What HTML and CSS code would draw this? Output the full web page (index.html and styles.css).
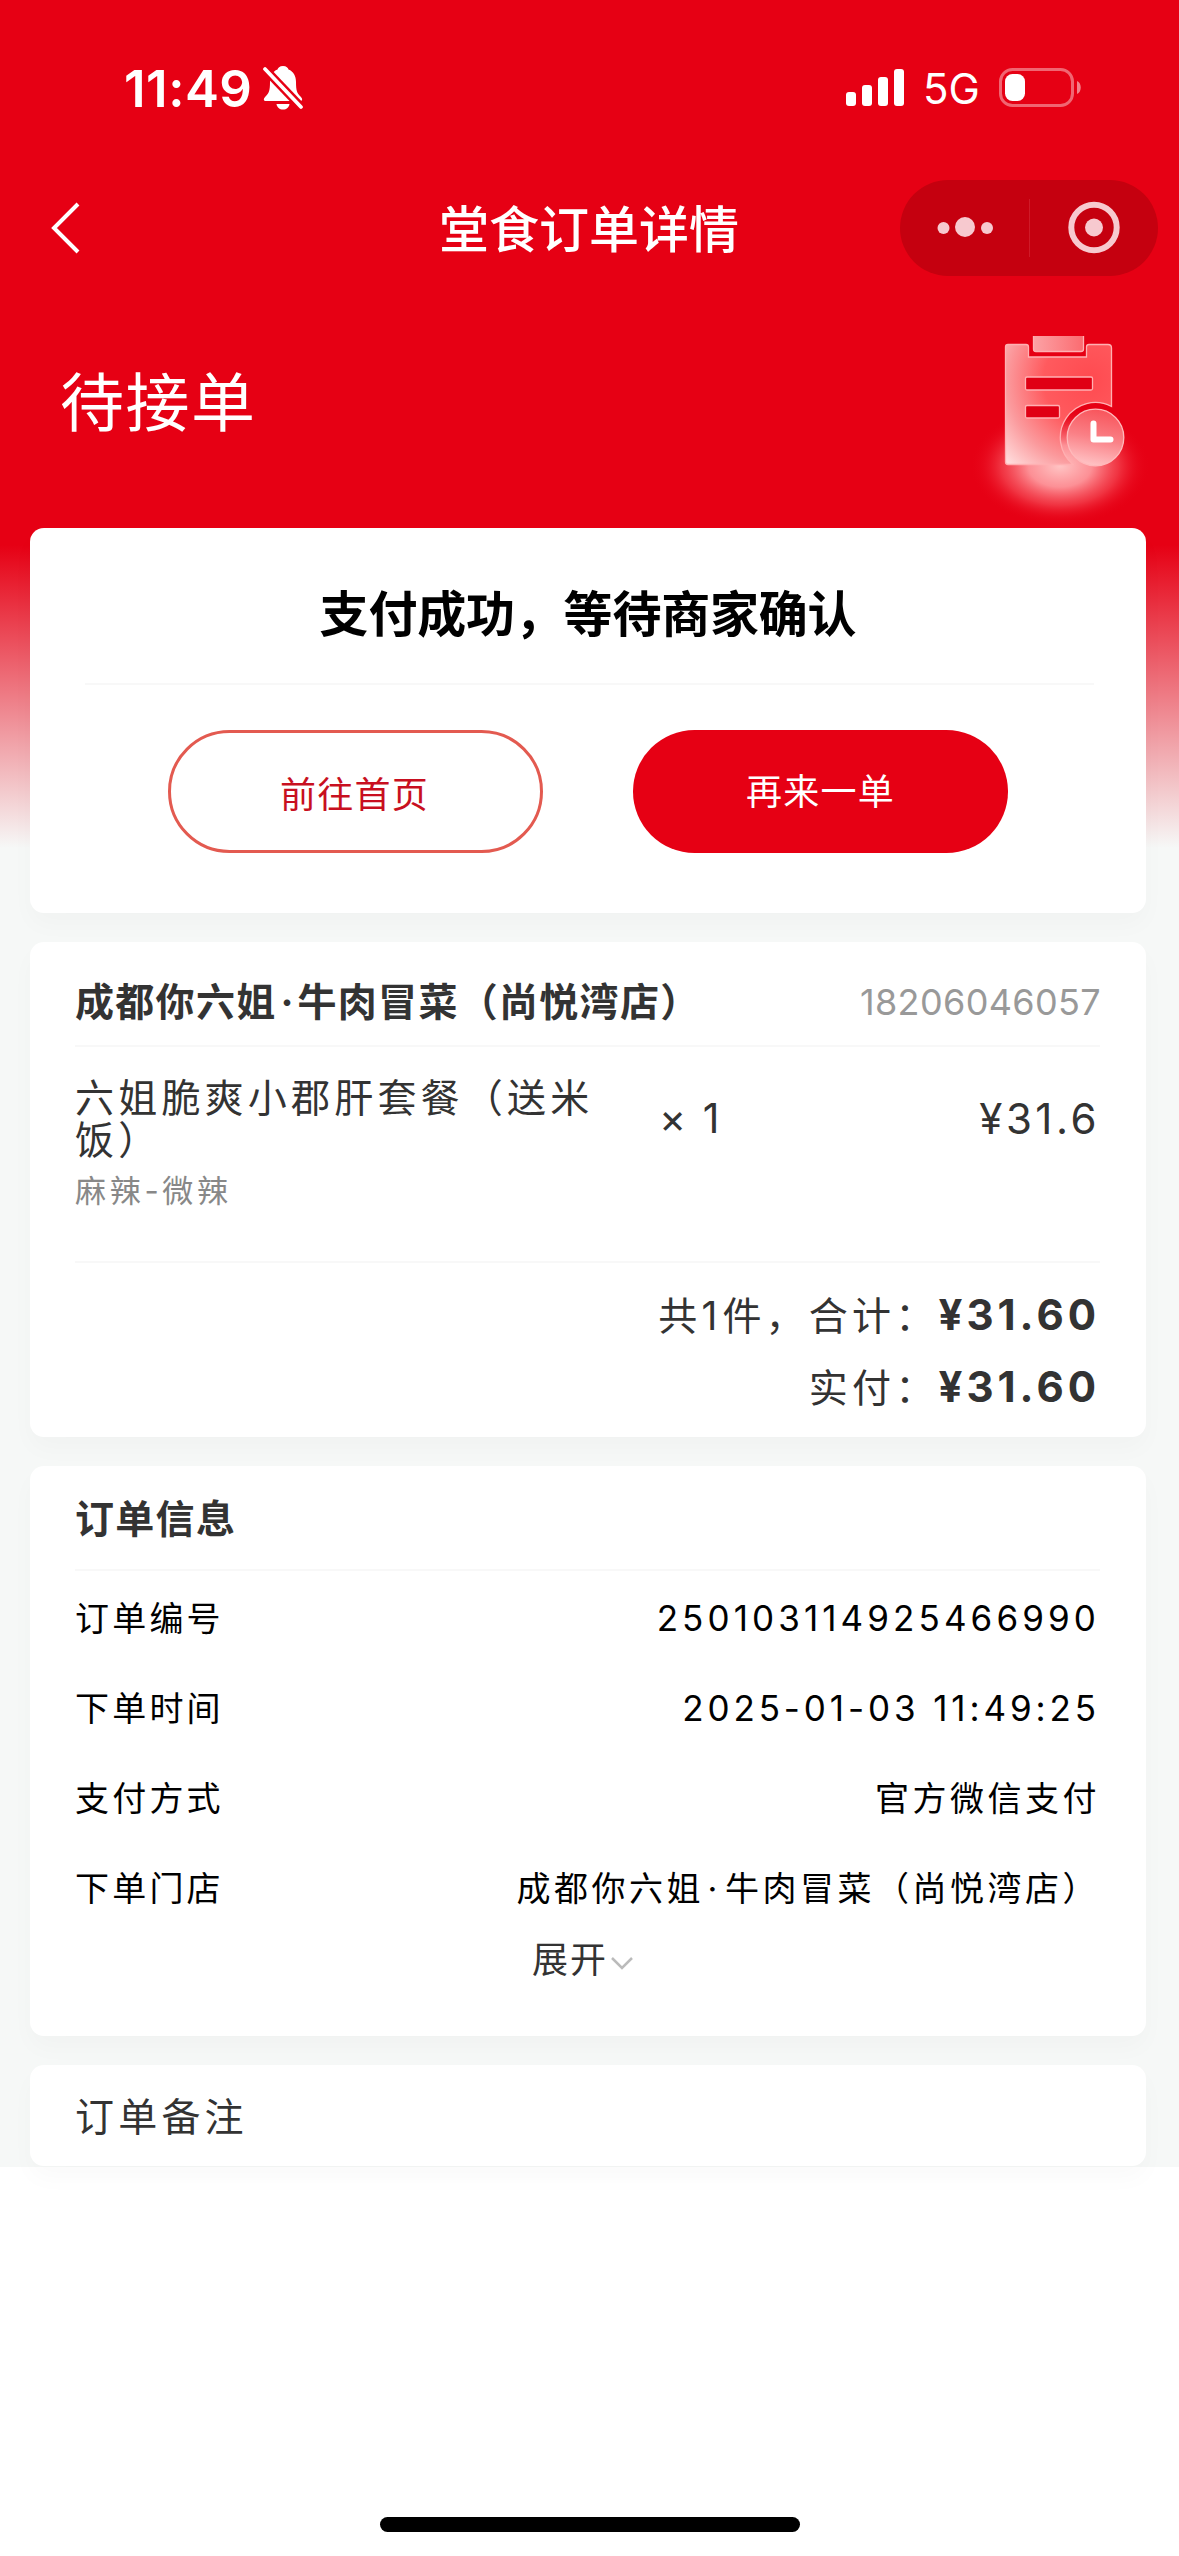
FILE: index.html
```
<!DOCTYPE html>
<html lang="zh-CN">
<head>
  <meta charset="UTF-8">
  <title>堂食订单详情</title>
  <link rel="stylesheet" href="styles.css">
</head>
<body>

  <div class="page">
    <div class="status-bar">
      <div class="status-left">
        <span class="time">11:49</span>
        <svg class="bell" width="40" height="44" viewBox="0 0 40 44">
          <path d="M20 0c-3.500 0-5 2-5.500 3.500C9.500 5.500 7 10 7 16c0 9-1 11-4.500 14.500C0 33 .5 35 3 35h34c2.500 0 3-2 .5-4.500C34 27 33 25 33 16c0-6-2.500-10.500-7.500-12.500C25 2 23.500 0 20 0z" fill="#fff"/>
          <path d="M13.500 38h13c-.5 3.500-3 5.500-6.500 5.500s-6-2-6.500-5.500z" fill="#fff"/>
          <path d="M0 1l40 42" stroke="#e60014" stroke-width="8.500"/>
          <path d="M2 3l36 38" stroke="#fff" stroke-width="3.700" stroke-linecap="round"/>
        </svg>
      </div>
      <div class="status-right">
        <svg width="58" height="38" viewBox="0 0 58 38" fill="#fff">
          <rect x="0" y="23" width="10" height="14" rx="3"/>
          <rect x="16" y="16" width="10" height="21" rx="3"/>
          <rect x="32" y="8" width="10" height="29" rx="3"/>
          <rect x="48" y="0" width="10" height="37" rx="3"/>
        </svg>
        <span class="network">5G</span>
        <svg class="battery" width="84" height="40" viewBox="0 0 84 40">
          <rect x="1.500" y="1.500" width="72" height="36" rx="12" fill="none" stroke="#fff" stroke-opacity=".4" stroke-width="3"/>
          <rect x="6" y="6" width="20" height="27" rx="7.500" fill="#fff"/>
          <path d="M78 13c5 2 5 11 0 13z" fill="#fff" fill-opacity=".5"/>
        </svg>
      </div>
    </div>

    <div class="nav">
      <svg class="back" width="30" height="54" viewBox="0 0 30 54">
        <path d="M28 3L4 27l24 24" fill="none" stroke="#fff" stroke-width="4"/>
      </svg>
      <h1>堂食订单详情</h1>
      <div class="capsule">
        <svg width="258" height="96" viewBox="0 0 258 96" fill="#f7c9cf">
          <circle cx="43.500" cy="48" r="6"/>
          <circle cx="65" cy="47" r="10"/>
          <circle cx="87" cy="48" r="6"/>
          <rect x="129" y="19" width="1" height="58" fill="#cf1a28"/>
          <circle cx="194" cy="47.500" r="22.700" fill="none" stroke="#f7c9cf" stroke-width="6"/>
          <circle cx="194" cy="47.500" r="9"/>
        </svg>
      </div>
    </div>

    <div class="state">
      <span>待接单</span>
      <svg width="219" height="208" viewBox="960 320 219 208">
        <defs>
          <radialGradient id="glow">
            <stop offset="0" stop-color="#ffc4c4"/>
            <stop offset=".35" stop-color="#ffa0a4" stop-opacity=".9"/>
            <stop offset=".65" stop-color="#fb6870" stop-opacity=".5"/>
            <stop offset=".85" stop-color="#f02838" stop-opacity=".2"/>
            <stop offset="1" stop-color="#e60014" stop-opacity="0"/>
          </radialGradient>
          <radialGradient id="paper" gradientUnits="userSpaceOnUse" cx="1090" cy="380" r="116">
            <stop offset="0" stop-color="#ff4a50"/>
            <stop offset=".4" stop-color="#ff5a5e"/>
            <stop offset=".72" stop-color="#fb9a9d"/>
            <stop offset="1" stop-color="#ffdcdc"/>
          </radialGradient>
          <linearGradient id="clock" x1=".6" y1="0" x2=".4" y2="1">
            <stop offset="0" stop-color="#f8545b"/>
            <stop offset=".5" stop-color="#fa8086"/>
            <stop offset="1" stop-color="#ffc4c6"/>
          </linearGradient>
          <linearGradient id="clip" x1="0" y1="0" x2="1" y2="0">
            <stop offset="0" stop-color="#fca3a6"/>
            <stop offset="1" stop-color="#fb6b70"/>
          </linearGradient>
        </defs>
        <ellipse cx="1060" cy="466" rx="90" ry="60" fill="url(#glow)"/>
        <path d="M1008 344.500h18q2.500 0 2.500 2.500v10h58v-10q0-2.500 2.500-2.500h19q3.500 0 3.500 3.500v58.500A35 35 0 0 0 1073 464.500h-65q-2.500 0-2.500-2.500V347q0-2.500 2.500-2.500z" fill="url(#paper)" stroke="#ffb0b2" stroke-width="1.300"/>
        <path d="M1033 336h51v13q0 3-3 3h-45q-3 0-3-3z" fill="url(#clip)"/>
        <path d="M1033.500 336v13q0 2.500 2.500 2.500h45q2.500 0 2.500-2.500v-13" fill="none" stroke="#ffb0b2" stroke-width="1.300"/>
        <rect x="1025.500" y="377" width="67" height="13" rx="1.500" fill="#e00014" stroke="#ffb0b2" stroke-width="1.300"/>
        <rect x="1025.500" y="405.500" width="34" height="12.500" rx="1.500" fill="#e00014" stroke="#ffb0b2" stroke-width="1.300"/>
        <circle cx="1095.500" cy="437.500" r="28.300" fill="url(#clock)" stroke="#ffb9bb" stroke-width="1.300"/>
        <path d="M1093.500 423.500v16h17" fill="none" stroke="#fff" stroke-width="6" stroke-linecap="round" stroke-linejoin="round"/>
      </svg>
    </div>

    <div class="card result">
      <h2>支付成功，等待商家确认</h2>
      <div class="buttons">
        <div class="btn btn-home">前往首页</div>
        <div class="btn btn-again">再来一单</div>
      </div>
    </div>

    <div class="card order">
      <div class="shop">
        <h3>成都你六姐<span class="dot">·</span>牛肉冒菜（尚悦湾店）</h3>
        <span class="phone">18206046057</span>
      </div>
      <div class="item">
        <div class="item-info">
          <div class="item-name">六姐脆爽小郡肝套餐（送米饭）</div>
          <div class="item-spec">麻辣-微辣</div>
        </div>
        <div class="item-count">× 1</div>
        <div class="item-price">¥31.6</div>
      </div>
      <div class="total">共<span class="num">1</span>件，合计：<b>¥31.60</b></div>
      <div class="total">实付：<b>¥31.60</b></div>
    </div>

    <div class="card info">
      <h3>订单信息</h3>
      <div class="row"><span>订单编号</span><span class="digits">250103114925466990</span></div>
      <div class="row"><span>下单时间</span><span class="digits date">2025-01-03 11:49:25</span></div>
      <div class="row"><span>支付方式</span><span class="value">官方微信支付</span></div>
      <div class="row"><span>下单门店</span><span class="value">成都你六姐<span class="dot">·</span>牛肉冒菜（尚悦湾店）</span></div>
      <div class="expand">
        <span>展开</span>
        <svg width="24" height="16" viewBox="0 0 24 16">
          <path d="M2 2l10 10L22 2" fill="none" stroke="#bbb" stroke-width="2.500"/>
        </svg>
      </div>
    </div>

    <div class="card remark">订单备注</div>
  </div>

  <div class="home-indicator"></div>

</body>
</html>
```
FILE: styles.css
```
* {
  box-sizing: border-box;
}
body {
  margin: 0;
  height: 2556px;
  background: #fff;
  font-family: Inter, "Noto Sans CJK SC", sans-serif;
  color: #333;
  display: flex;
  flex-direction: column;
  overflow: hidden;
}
h1, h2, h3 {
  margin: 0;
}
svg {
  display: block;
  flex: none;
}
.page {
  height: 2167px;
  background: linear-gradient(#e60014 545px, #f6f8f7 848px);
}

/* status bar */
.status-bar {
  height: 176px;
  padding: 0 96px 0 124px;
  display: flex;
  justify-content: space-between;
  align-items: center;
  color: #fff;
}
.status-left, .status-right {
  display: flex;
  align-items: center;
}
.time {
  width: 139px;
  font-size: 51px;
  font-weight: 600;
  letter-spacing: 0.500px;
}
.network {
  width: 75px;
  padding-left: 19px;
  margin-right: 20px;
  font-size: 42px;
}

/* nav */
.nav {
  height: 104px;
  padding: 0 21px 0 50px;
  display: grid;
  grid-template-columns: 258px 1fr 258px;
  align-items: center;
  color: #fff;
}
.nav h1 {
  font-size: 50px;
  font-weight: 500;
  line-height: 60px;
  text-align: center;
  padding: 4px 30px 0 0;
}
.capsule {
  height: 96px;
  border-radius: 48px;
  background: #c5000f;
}
.state {
  height: 248px;
  padding-left: 60px;
  display: flex;
  justify-content: space-between;
  align-items: center;
  color: #fff;
  font-size: 64px;
  letter-spacing: 1.500px;
}
.state span {
  padding-bottom: 12px;
}
.state svg {
  align-self: flex-end;
}

/* cards */
.card {
  margin: 0 33px 29px 30px;
  padding: 0 46px 0 45px;
  border-radius: 14px;
  background: #fff;
  box-shadow: 0 12px 24px rgba(0, 0, 0, 0.025);
}
.result {
  height: 385px;
  padding: 0 52px 0 55px;
}
.result h2 {
  height: 157px;
  padding: 57px 3px 0 0;
  line-height: 60px;
  border-bottom: 2px solid #f8f8f8;
  color: #000;
  font-size: 49px;
  letter-spacing: -0.200px;
  text-align: center;
}
.buttons {
  display: flex;
  gap: 90px;
  padding: 45px 0 0 83px;
}
.btn {
  width: 375px;
  height: 123px;
  border-radius: 62px;
  line-height: 125px;
  text-align: center;
  font-size: 36px;
  letter-spacing: 1.300px;
}
.btn-home {
  padding-right: 2px;
  border: 3px solid #e35a50;
  line-height: 125px;
  color: #c80f20;
}
.btn-again {
  background: #e60014;
  color: #fff;
}

.order {
  height: 495px;
}
.shop {
  height: 105px;
  display: flex;
  justify-content: space-between;
  align-items: center;
  padding-top: 10px;
  border-bottom: 2px solid #f8f8f8;
}
h3 {
  font-size: 39px;
  letter-spacing: 1.300px;
}
.dot {
  display: inline-block;
  width: 21px;
  letter-spacing: 0;
  text-align: center;
}
.phone {
  padding-top: 6px;
  margin-right: -1px;
  color: #999;
  font-size: 36px;
  letter-spacing: 0.350px;
}
.item {
  height: 216px;
  padding-top: 30px;
  display: flex;
  border-bottom: 2px solid #f8f8f8;
  font-size: 39px;
  letter-spacing: 4.200px;
}
.item-info {
  width: 540px;
}
.item-name {
  line-height: 42px;
}
.item-spec {
  margin-top: 9px;
  line-height: 42px;
  font-size: 31px;
  letter-spacing: 3.700px;
  color: #888;
}
.item-count {
  width: 150px;
  padding-left: 44px;
  line-height: 83px;
  white-space: nowrap;
  font-size: 41px;
  letter-spacing: 2.500px;
}
.item-price {
  flex: 1;
  line-height: 83px;
  text-align: right;
  font-size: 42px;
  letter-spacing: 3.500px;
}
.total {
  height: 72px;
  padding-top: 15px;
  line-height: 73px;
  text-align: right;
  font-size: 39px;
  letter-spacing: 4.200px;
}
.total b {
  font-size: 42px;
  letter-spacing: 4px;
}
.total .num {
  letter-spacing: 5px;
}

.info {
  height: 570px;
}
.info h3 {
  height: 105px;
  line-height: 106px;
  border-bottom: 2px solid #f8f8f8;
}
.row {
  height: 90px;
  padding-top: 2px;
  line-height: 91px;
  display: flex;
  justify-content: space-between;
  color: #000;
  font-size: 34px;
  letter-spacing: 3.200px;
}
.row .value {
  letter-spacing: 3.500px;
}
.row .digits {
  line-height: 90px;
  font-size: 35px;
  letter-spacing: 4.100px;
}
.row .date {
  letter-spacing: 3.900px;
}
.row .dot {
  margin: 0 2px 0 -2px;
}
.expand {
  margin-top: 4px;
  padding-left: 457px;
  display: flex;
  align-items: center;
  line-height: 50px;
  font-size: 36px;
  letter-spacing: 2px;
}
.expand svg {
  margin: 8px 0 0 2px;
}
.remark {
  height: 101px;
  margin-bottom: 0;
  line-height: 104px;
  font-size: 39px;
  letter-spacing: 4.200px;
}

.home-indicator {
  width: 420px;
  height: 15px;
  margin: auto auto 24px 380px;
  border-radius: 8px;
  background: #000;
}
```
